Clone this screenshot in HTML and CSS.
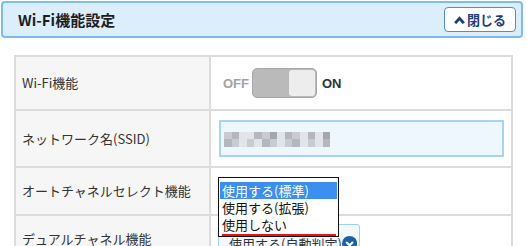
FILE: index.html
```html
<!DOCTYPE html>
<html lang="ja">
<head>
<meta charset="utf-8">
<title>Wi-Fi機能設定</title>
<link rel="stylesheet" href="styles.css">
</head>
<body>
<header class="panel-head">
  <h1 class="panel-title">Wi-Fi機能設定</h1>
  <button class="close-btn" type="button">
    <svg class="close-icon" width="11" height="8" viewBox="0 0 11 8"><path d="M1.2 7.2 L5.5 2.4 L9.8 7.2" fill="none" stroke="#1c3f78" stroke-width="2.8"/></svg>
    <span>閉じる</span>
  </button>
</header>

<div class="settings">
  <div class="cell label row1">Wi-Fi機能</div>
  <div class="cell value row1 toggle-cell">
    <span class="tg-off">OFF</span>
    <span class="tg-track"><span class="tg-knob"></span></span>
    <span class="tg-on">ON</span>
  </div>

  <div class="cell label row2">ネットワーク名(SSID)</div>
  <div class="cell value row2 input-cell">
    <div class="ssid-input">
      <div class="mosaic">
        <span class="m2"></span><span class="m3"></span><span class="m1"></span><span class="m1"></span><span class="m3"></span><span class="m2"></span><span class="m4"></span><span class="m1"></span><span class="m3"></span><span class="m2"></span><span class="m1"></span><span class="m3"></span><span class="m1"></span><span class="m4"></span>
        <span class="m3"></span><span class="m2"></span><span class="m1"></span><span class="m2"></span><span class="m1"></span><span class="m3"></span><span class="m2"></span><span class="m1"></span><span class="m2"></span><span class="m3"></span><span class="m1"></span><span class="m2"></span><span class="m1"></span><span class="m3"></span>
      </div>
    </div>
  </div>

  <div class="cell label row3">オートチャネルセレクト機能</div>
  <div class="cell value row3 select-cell">
    <div class="dropdown-list">
      <div class="opt selected">使用する(標準)</div>
      <div class="opt">使用する(拡張)</div>
      <div class="opt">使用しない</div>
      <div class="focus-line"></div>
    </div>
  </div>

  <div class="cell label row4">デュアルチャネル機能</div>
  <div class="cell value row4 select-cell">
    <div class="select-box">
      <span class="select-text">使用する(自動判定)</span>
      <svg class="select-icon" width="19" height="19" viewBox="0 0 19 19"><circle cx="9.5" cy="9.5" r="9.5" fill="#1f5fa6"/><path d="M5.2 7.6 L9.5 11.8 L13.8 7.6" fill="none" stroke="#fff" stroke-width="2.6"/></svg>
    </div>
  </div>
</div>
</body>
</html>
```

FILE: styles.css
```css
html, body {
  margin: 0;
  padding: 0;
  background: #ffffff;
}
body {
  font-family: "Noto Sans CJK JP", "Noto Sans", sans-serif;
  color: #333333;
  width: 527px;
  height: 246px;
  overflow: hidden;
}

.panel-head {
  box-sizing: border-box;
  margin: 1px 4px 0 1px;
  height: 37px;
  display: flex;
  align-items: center;
  justify-content: space-between;
  padding: 0 5px 0 15px;
  background: #dcedfc;
  border: 2px solid #7dbcef;
  border-radius: 4px;
}
.panel-title {
  margin: 0;
  font-size: 15px;
  line-height: 20px;
  font-weight: 700;
  color: #1e1e1e;
}
.close-btn {
  box-sizing: border-box;
  width: 72px;
  height: 25px;
  display: flex;
  align-items: center;
  justify-content: center;
  gap: 2px;
  padding: 0;
  background: #ffffff;
  border: 1px solid #4f8fd0;
  border-radius: 4px;
  font-family: "Noto Sans CJK JP", sans-serif;
  font-size: 13px;
  line-height: 16px;
  font-weight: 700;
  color: #1c3f78;
}
.close-icon {
  display: block;
  margin-top: 1px;
}

.settings {
  box-sizing: border-box;
  margin: 17px 14px 0 14px;
  width: 499px;
  display: grid;
  grid-template-columns: 195px 1fr;
  border-top: 2px solid #dcdcdc;
  border-left: 2px solid #dcdcdc;
}
.cell {
  box-sizing: border-box;
  border-right: 2px solid #dcdcdc;
  border-bottom: 2px solid #dcdcdc;
  display: flex;
  align-items: center;
}
.label {
  background: #f6f6f6;
  padding-left: 6px;
  font-size: 13px;
  line-height: 18px;
  color: #333333;
}
.value {
  background: #ffffff;
  padding-left: 8px;
}
.row1 { height: 54px; }
.row2 { height: 57px; }
.row3 { height: 48px; }
.row4 { height: 48px; }

.toggle-cell {
  padding-left: 12px;
  font-family: "Liberation Sans", Arial, sans-serif;
  font-weight: 700;
  font-size: 13px;
}
.tg-off { color: #a3a3a3; }
.tg-on { color: #333333; margin-left: 5px; }
.tg-track {
  box-sizing: border-box;
  margin-left: 3px;
  width: 65px;
  height: 30px;
  background: #bababa;
  border: 1px solid #a8a8a8;
  border-radius: 5px;
  display: flex;
  justify-content: flex-end;
  align-items: center;
  padding-right: 1px;
}
.tg-knob {
  width: 26px;
  height: 26px;
  background: #ededed;
  border-radius: 3px;
}

.input-cell { padding-left: 8px; }
.ssid-input {
  box-sizing: border-box;
  width: 285px;
  height: 37px;
  background: #eef6fe;
  border: 2px solid #a6d3f6;
  display: flex;
  align-items: center;
  padding-left: 3px;
}
.mosaic {
  display: grid;
  grid-template-columns: repeat(14, 7.6px);
  grid-template-rows: 7.5px 7.5px;
  margin-top: 1px;
}
.m1 { background: #e1e5ea; }
.m2 { background: #c8ccd2; }
.m3 { background: #b4b8be; }
.m4 { background: #a2a6ad; }

.select-cell {
  position: relative;
  padding-left: 7px;
  align-items: flex-start;
}
.dropdown-list {
  position: absolute;
  left: 7px;
  top: 9px;
  z-index: 2;
  box-sizing: border-box;
  width: 121px;
  height: 60px;
  background: #ffffff;
  border: 1px solid #111111;
  padding: 4px 1px 0 1px;
}
.opt {
  height: 17px;
  line-height: 17px;
  padding-left: 2px;
  font-size: 13px;
  color: #111111;
  white-space: nowrap;
}
.opt.selected {
  background: #3b8ff0;
  color: #ffffff;
}
.focus-line {
  margin: 1px 1px 0 2px;
  height: 2px;
  background: #e8141b;
}

.select-box {
  box-sizing: border-box;
  margin-top: 8px;
  width: 142px;
  height: 32px;
  background: #f3f8fd;
  border: 1px solid #9fcff4;
  border-radius: 3px;
  display: flex;
  align-items: center;
  justify-content: space-between;
  padding: 0 2px 0 10px;
}
.select-text {
  font-size: 13px;
  color: #333333;
  white-space: nowrap;
  margin-top: 6px;
}
.select-icon {
  display: block;
  margin-top: 6px;
}
```
